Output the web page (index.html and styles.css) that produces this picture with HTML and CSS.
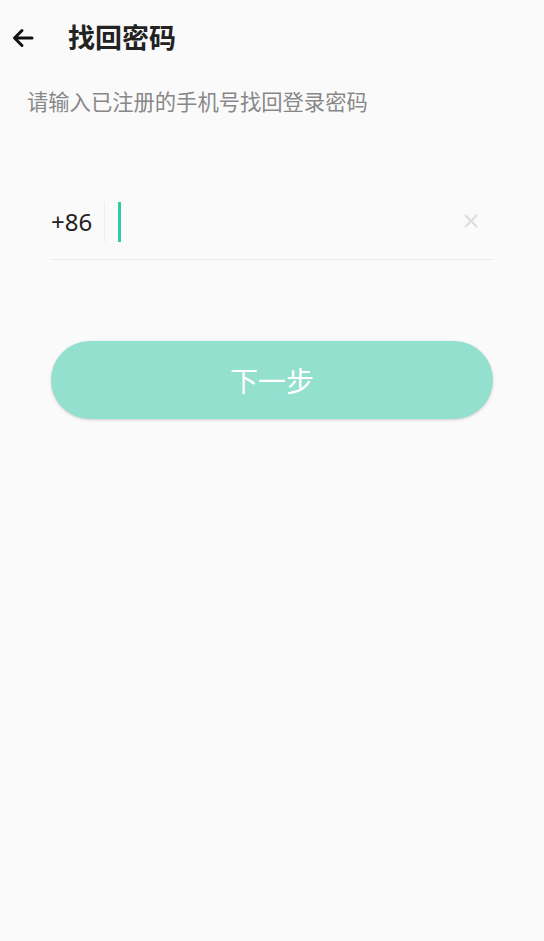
FILE: index.html
```html
<!DOCTYPE html>
<html lang="zh">
<head>
<meta charset="utf-8">
<link rel="stylesheet" href="styles.css">
</head>
<body>
<div class="page">
  <header class="bar">
    <svg class="back" width="24" height="24" viewBox="0 0 24 24"><path d="M21 12H4M11 4.5L3.5 12L11 19.5" fill="none" stroke="#111" stroke-width="3" stroke-linecap="round" stroke-linejoin="round"/></svg>
    <h1 class="title">找回密码</h1>
  </header>
  <p class="hint">请输入已注册的手机号找回登录密码</p>
  <div class="field">
    <span class="code">+86</span>
    <span class="sep"></span>
    <span class="cursor"></span>
    <span class="grow"></span>
    <svg class="clear" width="14" height="14" viewBox="0 0 14 14"><path d="M1 1L13 13M13 1L1 13" stroke="#dcdcdc" stroke-width="2"/></svg>
  </div>
  <button class="next">下一步</button>
</div>
</body>
</html>
```
FILE: styles.css
```css
html, body {
  margin: 0;
  padding: 0;
  background: #fafafa;
  font-family: "Noto Sans CJK SC", "Noto Sans", sans-serif;
}
.page {
  width: 544px;
  min-height: 941px;
  box-sizing: border-box;
}
.bar {
  display: flex;
  align-items: center;
  height: 76px;
  padding-left: 11px;
}
.back {
  display: block;
}
.title {
  margin: 0 0 3px 33px;
  font-size: 27px;
  font-weight: 700;
  color: #222;
  line-height: 1;
}
.hint {
  margin: 12px 0 0 27px;
  font-size: 21.3px;
  line-height: 26px;
  color: #888;
}
.field {
  display: flex;
  align-items: flex-start;
  margin: 88px 51px 0 51px;
  height: 57px;
  border-bottom: 1px solid #ececec;
}
.code {
  font-family: "Noto Sans", sans-serif;
  font-size: 24px;
  color: #222;
  line-height: 40px;
  height: 40px;
}
.sep {
  width: 1px;
  height: 40px;
  background: #eeeeee;
  margin-left: 12px;
}
.cursor {
  width: 3px;
  height: 40px;
  background: #2fcca2;
  margin-left: 13px;
}
.grow {
  flex: 1;
}
.clear {
  display: block;
  margin-top: 12px;
  margin-right: 15px;
}
.next {
  display: block;
  margin: 81px 0 0 51px;
  width: 442px;
  height: 78px;
  border: none;
  border-radius: 39px;
  background: #92e0cd;
  color: #fff;
  font-family: "Noto Sans CJK SC", sans-serif;
  font-size: 28px;
  box-shadow: 0 1px 3px rgba(0,0,0,0.18);
  padding: 0;
}
```
